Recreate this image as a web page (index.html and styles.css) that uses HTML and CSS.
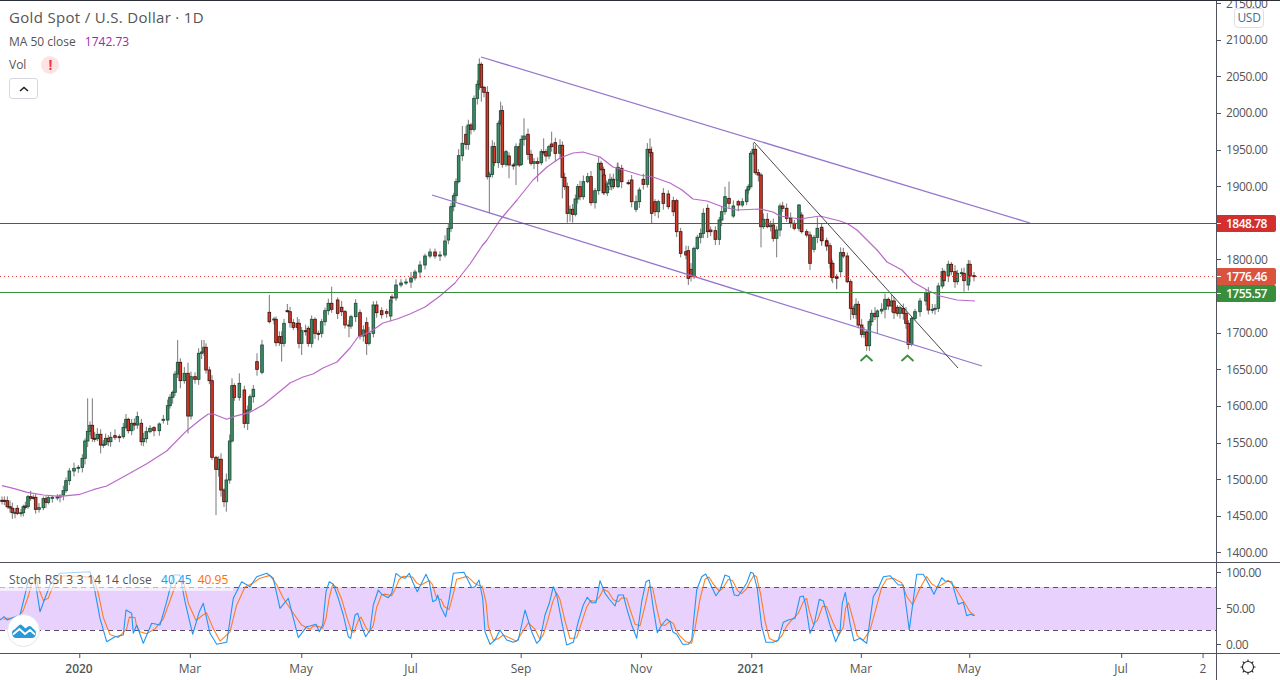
FILE: index.html
```html
<!DOCTYPE html>
<html lang="en">
<head>
<meta charset="utf-8">
<title>Gold Spot / U.S. Dollar</title>
<link rel="stylesheet" href="styles.css">
</head>
<body>
<div class="chart">
  <div class="row row-main">
    <div class="pane">
      <svg id="price-svg" class="plot" width="1216" height="561" viewBox="0 1 1216 561">
        <g id="candles"></g>
        <polyline id="ma" class="ma-line" points=""/>
        <line class="channel" x1="481" y1="57" x2="1030" y2="223"/>
        <line class="channel" x1="432" y1="195" x2="982" y2="366"/>
        <line class="trend" x1="754" y1="142" x2="958" y2="368"/>
        <line class="level-red" x1="0" y1="223.5" x2="1216" y2="223.5"/>
        <line class="level-dot" x1="0" y1="276.5" x2="1216" y2="276.5"/>
        <line class="level-green" x1="0" y1="292.5" x2="1216" y2="292.5"/>
        <polyline class="hat" points="860.5,361 866.5,355.5 872.5,361"/>
        <polyline class="hat" points="901.5,361 907.5,355.5 913.5,361"/>
      </svg>
      <div class="legend">
        <div class="legend-title">Gold Spot / U.S. Dollar · 1D</div>
        <div class="legend-line"><span>MA 50 close</span><span class="val-ma">1742.73</span></div>
        <div class="legend-line legend-vol"><span>Vol</span><span class="alert">!</span></div>
        <button class="collapse" aria-label="Collapse">
          <svg width="10" height="6" viewBox="0 0 10 6"><polyline class="chev" points="1,5 5,1.5 9,5"/></svg>
        </button>
      </div>
    </div>
    <div class="axis">
      <div class="ticks">
        <div class="tick">2150.00</div><div class="tick">2100.00</div><div class="tick">2050.00</div><div class="tick">2000.00</div>
        <div class="tick">1950.00</div><div class="tick">1900.00</div><div class="tick">1850.00</div><div class="tick">1800.00</div>
        <div class="tick">1750.00</div><div class="tick">1700.00</div><div class="tick">1650.00</div><div class="tick">1600.00</div>
        <div class="tick">1550.00</div><div class="tick">1500.00</div><div class="tick">1450.00</div><div class="tick">1400.00</div>
      </div>
      <div class="usd">USD</div>
      <div class="badge badge-res">1848.78</div>
      <div class="badge badge-last">1776.46</div>
      <div class="badge badge-sup">1755.57</div>
    </div>
  </div>
  <div class="row row-stoch">
    <div class="pane">
      <svg id="stoch-svg" class="plot" width="1216" height="90" viewBox="0 563 1216 90">
        <rect class="band" x="0" y="587" width="1216" height="43"/>
        <line class="band-edge" x1="0" y1="587.5" x2="1216" y2="587.5"/>
        <line class="band-edge" x1="0" y1="630.5" x2="1216" y2="630.5"/>
        <polyline id="stoch-d" class="line-d" points=""/>
        <polyline id="stoch-k" class="line-k" points=""/>
      </svg>
      <div class="stoch-legend">
        <span class="stoch-name">Stoch RSI 3 3 14 14 close</span><span class="val-k">40.45</span><span class="val-d">40.95</span>
      </div>
      <div class="logo">
        <svg width="24" height="14" viewBox="0 0 24 14">
          <path class="logo-fill" d="M0 9 C0 7 1 6 2.500 5.500 L7 1.200 C8 .3 9 .3 10 1.200 L13.500 4.500 L16 2.500 C17 1.700 18 1.700 19 2.500 L22 5.500 C23.500 6.300 24 8 24 9.500 C24 12 22 14 20 14 L4 14 C2 14 0 12 0 9 Z"/>
          <polyline class="logo-cut" points="1,10.500 7.500,5 13,10 18,6 23,10.500"/>
        </svg>
      </div>
    </div>
    <div class="axis">
      <div class="ticks-stoch">
        <div class="tick tick-s">100.00</div><div class="tick tick-s">50.00</div><div class="tick tick-s">0.00</div>
      </div>
    </div>
  </div>
  <div class="row row-time">
    <div class="times">
      <span class="time strong" style="left:79px">2020</span>
      <span class="time" style="left:190px">Mar</span>
      <span class="time" style="left:301px">May</span>
      <span class="time" style="left:411px">Jul</span>
      <span class="time" style="left:521px">Sep</span>
      <span class="time" style="left:641px">Nov</span>
      <span class="time strong" style="left:751px">2021</span>
      <span class="time" style="left:861px">Mar</span>
      <span class="time" style="left:969px">May</span>
      <span class="time" style="left:1121px">Jul</span>
      <span class="time" style="left:1203px">2</span>
    </div>
    <div class="corner">
      <svg width="18" height="18" viewBox="0 0 18 18">
        <circle class="gear" cx="9" cy="9" r="5.500"/>
        <path class="gear" d="M9 1.500V3.500M9 14.500V16.500M1.500 9H3.500M14.500 9H16.500M3.700 3.700L5.100 5.100M12.900 12.900L14.300 14.300M14.300 3.700L12.900 5.100M5.100 12.900L3.700 14.300"/>
      </svg>
    </div>
  </div>
</div>
<script src="chart.js"></script>
</body>
</html>
```

FILE: styles.css
```css
* { box-sizing: border-box; }
html, body { margin: 0; padding: 0; background: #fff; }
body { font-family: "Open Sans", "Noto Sans", sans-serif; color: #555; }
.chart { width: 1280px; height: 680px; display: flex; flex-direction: column; border-top: 1px solid #2a2e39; overflow: hidden; }
.row { display: flex; }
.row-main { height: 562px; border-bottom: 1px solid #50535e; }
.row-stoch { height: 91px; border-bottom: 1px solid #50535e; }
.row-time { height: 26px; }
.pane { position: relative; width: 1216px; flex: none; overflow: hidden; }
.plot { display: block; }
.axis { position: relative; width: 64px; flex: none; border-left: 1px solid #50535e; overflow: hidden; }

.ticks { display: flex; flex-direction: column; margin-top: -16.300px; }
.tick { height: 36.630px; display: flex; align-items: center; font-size: 12px; color: #555; padding-left: 9px; position: relative; flex: none; letter-spacing: -.4px; }
.tick::before { content: ""; position: absolute; left: 0; top: 50%; width: 4px; height: 1px; background: #50535e; }
.ticks-stoch { display: flex; flex-direction: column; margin-top: -8.700px; }
.tick-s { height: 36px; }

.usd { position: absolute; left: 17px; top: 7px; width: 30px; height: 20px; border: 1px solid #dcdfe6; border-radius: 4px; background: #fff; font-size: 12px; line-height: 18px; text-align: center; color: #4a6a8a; letter-spacing: -.3px; }

.badge { position: absolute; left: 0; width: 59px; height: 17px; color: #fff; font-size: 12px; font-weight: 600; line-height: 17px; padding-left: 9px; border-radius: 0 2px 2px 0; letter-spacing: -.5px; }
.badge::before { content: ""; position: absolute; left: 0; top: 8px; width: 4px; height: 1px; background: #fff; }
.badge-res { top: 214px; background: #d32f2f; }
.badge-last { top: 267px; background: #d9533f; }
.badge-sup { top: 284px; background: #388e3c; }

.legend { position: absolute; left: 9px; top: 6px; display: flex; flex-direction: column; align-items: flex-start; }
.legend-title { font-size: 15px; line-height: 20px; color: #555; letter-spacing: .32px; }
.legend-line { font-size: 12px; line-height: 18px; margin-top: 6px; display: flex; gap: 9px; color: #555; }
.val-ma { color: #9c27b0; }
.legend-vol { margin-top: 5px; align-items: center; gap: 15px; }
.alert { width: 18px; height: 18px; border-radius: 50%; background: #fde3e3; color: #f23645; font-weight: 700; font-size: 14px; line-height: 18px; text-align: center; }
.collapse { width: 29px; height: 21px; margin-top: 4px; padding: 0; background: #fff; border: 1px solid #d6d8e0; border-radius: 3px; display: flex; align-items: center; justify-content: center; }
.chev { fill: none; stroke: #222; stroke-width: 1.600; }

.ma-line { fill: none; stroke: #ba68c8; stroke-width: 1.200; stroke-linejoin: round; }
.channel { stroke: #9575cd; stroke-width: 1.300; }
.trend { stroke: #333; stroke-width: .900; }
.level-red { stroke: #c62828; stroke-width: 1; }
.level-dot { stroke: #e53935; stroke-width: 1; stroke-dasharray: 1 3; }
.level-green { stroke: #388e3c; stroke-width: 1; }
.hat { fill: none; stroke: #388e3c; stroke-width: 1.800; }
.wick { stroke: #787878; stroke-width: 1; }
.up { fill: #3e8e68; stroke: #1f4f3a; stroke-width: .900; }
.down { fill: #d63a2a; stroke: #4a1712; stroke-width: .900; }

.band { fill: #e9d1fd; }
.band-edge { stroke: #5f4a6e; stroke-width: 1; stroke-dasharray: 5 4; }
.line-k { fill: none; stroke: #2196f3; stroke-width: 1.100; stroke-linejoin: round; }
.line-d { fill: none; stroke: #ff6d00; stroke-width: 1.100; stroke-linejoin: round; opacity: .85; }

.stoch-legend { position: absolute; left: 0; top: 3px; width: 233px; height: 25px; padding: 4px 0 0 9px; background: rgba(255,255,255,.6); display: flex; font-size: 12px; line-height: 20px; color: #555; }
.stoch-name { letter-spacing: .25px; margin-right: 9px; }
.val-k { color: #2196f3; margin-right: 6px; }
.val-d { color: #ff6d00; }

.logo { position: absolute; left: 7px; top: 51px; width: 33px; height: 33px; border-radius: 50%; background: #fff; border: 1px solid #e4e6ea; display: flex; align-items: center; justify-content: center; }
.logo-fill { fill: #2a9ad6; }
.logo-cut { fill: none; stroke: #fff; stroke-width: 1.800; stroke-linejoin: round; }

.times { position: relative; width: 1216px; flex: none; }
.time { position: absolute; top: 0; height: 26px; line-height: 29px; font-size: 12px; color: #555; transform: translateX(-50%); }
.time::before { content: ""; position: absolute; left: 50%; top: 0; width: 1px; height: 4px; background: #50535e; }
.strong { font-weight: 600; }
.corner { flex: 1; border-left: 1px solid #50535e; display: flex; align-items: center; justify-content: center; padding-right: 1px; }
.gear { fill: none; stroke: #222; stroke-width: 1.100; }
```

FILE: chart.js
```js
// Traced series. Each block is read in a 3x frame with its own origin.
var NS = "http://www.w3.org/2000/svg";
var blocks = [
 [0, 340, "6 481 481;13 481 481;22 482 500;30 500 504;37 505 518;45 518 517;52 505 520;63 520 518;70 518 500;76 498 502;84 500 470;92 470 475;100 472 473;107 472 508;117 508 503;130 503 476;138 476 487;145 487 473;157 473 472;172 472 471;180 471 468;190 465 452;198 452 422;208 422 393;222 393 385;235 385 382;247 382 355;255 355 303;263 303 274 h175;270 274 256;277 256 295 h175;284 295 296;292 296 283;302 283 315 l340;310 315 313;317 313 295;325 295 305;332 305 292;345 287 292 h268;358 290 291;370 290 262;378 262 238 h222;385 238 272;395 272 250;403 250 255;412 255 230 h215;424 250 305;430 305 296;439 296 275;450 275 265;462 263 272;478 272 252;490 240 238;503 240 197;510 197 172;518 172 157;525 157 102;533 102 67 h0;541 67 122 l145;553 122 100;564 100 228 h68 l280;573 228 110;585 110 118;596 118 40;605 40 36 h0;612 36 22 h0;618 22 90;628 90 122;636 122 352;648 352 388 l525;656 388 358 l410;663 358 450 l470;672 450 485;679 485 420 l515;689 420 303;696 303 137 h115;703 137 172;718 172 130 h100;733 150 250;743 250 210 l270;750 210 170;760 170 148;771 65 88 h40;786 97 15"],
 [150, 300, "358 37 65 h-15;372 60 57;378 58 128;388 110 128;395 110 130 l185;402 130 70;412 32 33 h12;420 35 68;430 68 82;442 70 82;447 70 130;455 130 92 l165;467 92 95;475 85 130;485 130 58;495 58 100;505 100 103;515 100 65;525 65 32;535 32 10;545 10 28 h-40;563 0 40;575 22 35;585 35 75;597 75 78 l112;603 78 50;617 50 10;630 38 108;640 108 90;650 68 130 l165;657 130 100;670 100 15;680 15 38;695 32 44;710 35 40;722 48 0"],
 [0, 0, "392 297 298;396 298 285;401 285 283;406 283 282;411 282 278;415 278 272;420 272 265;425 265 256;430 256 252;435 252 256;440 256 255;445 255 241"],
 [400, 50, "145 570 535;153 535 470;161 470 437;168 437 395;176 395 317;187 317 280 h228;198 253 283 h228;205 283 225;213 225 238;222 238 145;232 145 103;238 103 43 h25;244 43 112 l155;252 112 127;262 127 380;268 380 373 l490;277 373 290;283 290 338;295 338 220;302 220 182 h155;307 182 343;318 343 305;327 318 345 l385;340 345 347;348 345 290 l405;358 290 345;364 343 268;372 268 258 h205;384 253 313;393 313 340;402 340 335;413 335 340 l395;424 338 305;431 305 305 h265;438 305 318;447 318 290;455 282 290 h245;466 278 310 l335;480 310 286;487 286 382 l445;494 382 410;502 410 490 l518;510 490 478 l515;518 478 493 l518;526 493 447;533 447 410;540 410 440;550 440 395;563 395 380;573 380 458;585 458 422;596 422 340;603 340 358;610 358 428;620 420 402;630 402 388;640 388 410;654 410 352"],
 [560, 130, "132 135 188;142 188 170;155 170 150;172 150 115;185 115 155;205 158 160;215 150 215;228 238 215;238 215 180;250 148 163;262 163 58;270 58 68 h25;275 68 250 l280;285 215 245;295 245 215;310 190 220;325 192 230;340 212 245;350 212 305;362 305 370;378 365 375;385 362 445 l465;393 418 440;402 440 355;412 355 322;422 322 310;430 310 250;443 235 305;452 300 305;466 302 328 l345;478 328 270;485 270 245;495 245 200 h170;507 205 220 h155;520 258 228;535 215 225;547 225 215;560 215 180;565 180 170;572 170 70;580 70 58 h38;586 58 128;595 128 135;603 135 290 l352;610 290 268;622 268 290;632 290 285;640 285 325 l335;650 325 300 l382;660 300 228;668 228 235;680 235 265;692 265 278;703 280 295;717 295 225 h222;725 255 305;740 305 315;750 315 400 l420;762 358 322;772 322 295 h262;785 292 332;800 332 348;815 400 442;830 440 442 l475"],
 [820, 230, "5 0 32;20 35 47 l60;30 47 100;38 100 142;50 142 143 l178;62 125 68 h52;70 68 78;82 78 155;92 155 235 l270;100 235 253;108 253 223;115 223 285;125 285 313;132 313 306;140 306 347 l362;148 347 275;155 275 250;165 250 260;172 260 243 l310;185 243 238;195 238 208 l265;205 208 228;215 228 213;222 213 248;232 232 250;240 250 233;250 235 250;258 250 280;265 280 343 l358;275 343 265;285 265 245;300 245 213;318 213 188;325 188 240;337 240 238;345 238 235;355 235 168;367 168 125;372 125 152;385 138 103 h92;394 103 125;405 125 155;412 155 130;425 130 128;432 130 152 l185;445 165 103 h90;450 103 138;462 137 140"]
];

var seed = 17;
function rnd() { seed = (seed * 1103 + 12345) % 65536; return seed / 65536; }
function make(tag, cls, attrs) {
  var el = document.createElementNS(NS, tag);
  el.setAttribute("class", cls);
  for (var k in attrs) el.setAttribute(k, attrs[k]);
  return el;
}

var group = document.getElementById("candles");
var wicks = document.createDocumentFragment();
var bodies = document.createDocumentFragment();
blocks.forEach(function (b) {
  var ox = b[0], oy = b[1], f = (ox === 0 && oy === 0) ? 1 : 3;
  b[2].split(";").forEach(function (item) {
    var p = item.split(" ");
    var x = ox + (+p[0]) / f, o = oy + (+p[1]) / f, c = oy + (+p[2]) / f;
    var top = Math.min(o, c), bot = Math.max(o, c);
    var hi = top - (1.500 + rnd() * 5), lo = bot + (1.500 + rnd() * 5);
    p.slice(3).forEach(function (t) {
      var v = oy + (+t.slice(1)) / f;
      if (t[0] === "h") hi = v; else lo = v;
    });
    wicks.appendChild(make("line", "wick", { x1: x, x2: x, y1: hi, y2: lo }));
    bodies.appendChild(make("rect", c < o ? "up" : "down", {
      x: x - 1.300, y: top, width: 2.600, height: Math.max(bot - top, 1)
    }));
  });
});
group.appendChild(wicks);
group.appendChild(bodies);

function toPts(ox, oy, f, s) {
  return s.trim().split(/;\s*/).map(function (q) {
    var a = q.split(",");
    return [ox + (+a[0]) / f, oy + (+a[1]) / f];
  });
}
function str(pts) { return pts.map(function (a) { return a[0].toFixed(1) + "," + a[1].toFixed(1); }).join(" "); }

var ma = [].concat(
  toPts(0, 340, 3, "6,437;40,445;82,457;130,465;180,469;240,463;280,449;320,438;380,405;440,371;500,333;560,272;600,240;625,222;640,222;680,238;700,230;750,217"),
  toPts(0, 0, 1, "263,405;273,397;290,383;303,377;313,374;323,368;337,362;350,348;358,337;370,332;383,323;397,319;410,314;425,307;440,296;455,283;470,264;482,246;487,240;500,220;517,200;533,180;547,167;560,158;573,153;583,152;600,157;613,167;627,171;640,175;653,177;670,183;682,190;693,199;707,201;723,207;737,210;760,209;773,212;780,216;800,219;820,216;840,221;848,224;857,230;877,250;887,262;902,270;913,282;927,290;940,296;957,300;975,301")
);
document.getElementById("ma").setAttribute("points", str(ma));

var k = [].concat(
  toPts(0, 555, 3, "0,195;12,185;22,195;45,185;60,180;75,120;85,75;100,70;105,75;120,170;135,130;150,90;180,55;270,50;285,110;300,190;320,260;345,245;370,240;378,165;395,175;400,235;410,210;430,265;455,205;480,210;500,140;520,60;540,60;555,140;578,238;598,170;610,145;630,235;650,268;680,262;700,130;725,80;750,95;770,65;800,55;820,70;840,160;865,130;895,248;920,215"),
  toPts(310, 565, 3, "0,183;18,178;28,200;38,180;48,80;58,50;70,58;85,100;100,150;115,215;122,220;135,150;143,145;155,185;167,215;180,195;190,120;205,75;215,88;235,98;245,85;258,25;270,35;285,40;298,25;310,55;322,80;348,28;358,50;368,110;378,105;383,90;392,125;407,155;418,100;430,25;462,22;485,68;495,65;507,45;518,100;525,200;540,238;555,225;570,195;590,225;610,232;625,225;645,135;665,200;680,235;690,225;705,150;718,115;730,65;740,90;755,170;770,240;790,232;805,170;820,120;832,97;845,113;858,113;870,47;885,85;900,105;915,123;925,90;940,90;950,130;965,180;980,220"),
  toPts(640, 565, 3, "5,110;18,50;28,45;40,130;52,203;65,180;80,162;90,170;98,200;110,208;128,238;145,238;155,225;170,75;185,35;197,27;210,55;228,92;240,75;255,30;268,35;283,90;295,92;310,70;320,55;332,22;340,25;352,70;365,185;378,232;400,232;415,225;430,172;445,165;465,160;480,95;490,93;497,120;510,205;522,180;538,103;550,108;570,180;587,230;600,200;607,115;616,82;630,175;642,228;660,220;680,235;700,95;715,70;730,35;750,32;775,60;790,60;808,195;830,28;850,28;865,55;882,88;905,38;915,48;935,50;955,118;970,112;980,152;992,148;1003,152")
);
document.getElementById("stoch-k").setAttribute("points", str(k));

var d = k.map(function (p, i) {
  var a = k[Math.max(i - 1, 0)], c = k[Math.min(i + 1, k.length - 1)];
  var y = (a[1] + 2 * p[1] + c[1]) / 4;
  return [Math.min(p[0] + 3.300, 975), y];
});
document.getElementById("stoch-d").setAttribute("points", str(d));
```
